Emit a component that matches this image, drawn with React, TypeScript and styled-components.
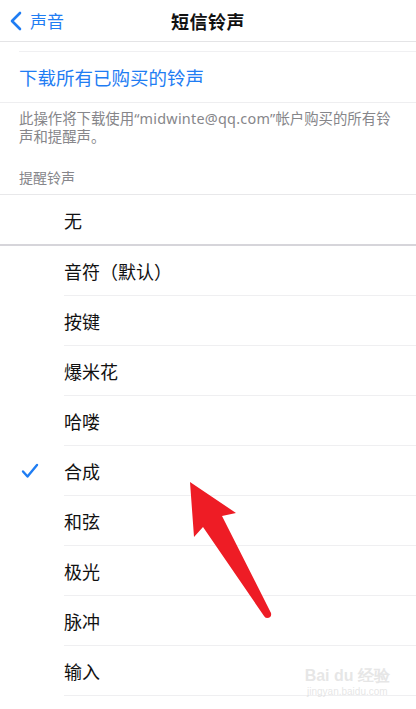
import React from "react";
import styled, { createGlobalStyle } from "styled-components";

const Global = createGlobalStyle`
  html, body { margin: 0; padding: 0; background: #fff; }
  body { font-family: "Noto Sans CJK SC", "Noto Sans", "Liberation Sans", sans-serif; }
`;

const Screen = styled.div`
  position: relative;
  width: 416px;
  height: 709px;
  overflow: hidden;
  background: #fff;
`;

const NavBar = styled.header`
  height: 42px;
  display: grid;
  grid-template-columns: 1fr auto 1fr;
  align-items: center;
  border-bottom: 1px solid #e4e4e6;
  box-sizing: border-box;
`;

const Back = styled.div`
  display: flex;
  align-items: center;
  gap: 8px;
  padding-left: 9px;
  color: #1f7df3;
  font-size: 17px;
  line-height: 1;
`;

const Title = styled.div`
  font-size: 18px;
  font-weight: 700;
  color: #111;
  letter-spacing: 0.5px;
`;

const TopGap = styled.div`
  height: 9px;
  margin-left: 19px;
  border-bottom: 1px solid #f0f0f2;
`;

const ActionRow = styled.div`
  height: 50px;
  display: flex;
  align-items: center;
  padding-left: 19px;
  color: #1f7df3;
  font-size: 18.5px;
  border-bottom: 1px solid #eeeef0;
`;

const Footer = styled.div`
  padding: 7px 20px 0 19px;
  color: #86868a;
  font-family: "Noto Sans", "Noto Sans CJK SC", sans-serif;
  font-size: 14.4px;
  line-height: 18px;
`;

const Email = styled.span`
  letter-spacing: 0.25px;
`;

const SectionHeader = styled.div`
  padding: 22px 19px 8px;
  color: #86868a;
  font-size: 14px;
  line-height: 18px;
  border-bottom: 1px solid #e8e8ea;
`;

const Row = styled.div<{ $strong?: boolean }>`
  height: ${(p) => (p.$strong ? "49px" : "50px")};
  display: flex;
  align-items: center;
  position: relative;
  font-size: 18px;
  color: #111;
  box-sizing: border-box;
`;

const Check = styled.div`
  width: 64px;
  display: flex;
  justify-content: center;
  padding-right: 4px;
  box-sizing: border-box;
`;

const RowLabel = styled.div<{ $divider: "inset" | "none" }>`
  flex: 1;
  height: 100%;
  display: flex;
  align-items: center;
  box-sizing: border-box;
  border-bottom: ${(p) =>
    p.$divider === "inset" ? "1px solid #efeff1" : "none"};
`;

const ThickLine = styled.div`
  height: 2px;
  background: #d6d5da;
`;

const Overlay = styled.svg`
  position: absolute;
  left: 0;
  top: 0;
  pointer-events: none;
`;

const Watermark = styled.div`
  position: absolute;
  right: 26px;
  bottom: 11px;
  text-align: center;
  color: rgba(205, 205, 205, 0.5);
  font-family: "Liberation Sans", sans-serif;
  pointer-events: none;
`;

const WmTop = styled.div`
  font-size: 16px;
  font-weight: 700;
  line-height: 20px;
`;

const WmBottom = styled.div`
  font-size: 10px;
  line-height: 12px;
`;

const tones = ["音符（默认）", "按键", "爆米花", "哈喽", "合成", "和弦", "极光", "脉冲", "输入"];

export default function App() {
  return (
    <Screen>
      <Global />
      <NavBar>
        <Back>
          <svg width="13" height="20" viewBox="0 0 13 20">
            <path d="M11 2 L3 10 L11 18" fill="none" stroke="#1f7df3" strokeWidth="2.6" strokeLinecap="round" strokeLinejoin="round" />
          </svg>
          <span>声音</span>
        </Back>
        <Title>短信铃声</Title>
        <div />
      </NavBar>
      <TopGap />
      <ActionRow>下载所有已购买的铃声</ActionRow>
      <Footer>
        此操作将下载使用<Email>“midwinte@qq.com”</Email>帐户购买的所有铃声和提醒声。
      </Footer>
      <SectionHeader>提醒铃声</SectionHeader>
      <Row $strong>
        <Check />
        <RowLabel $divider="none">无</RowLabel>
      </Row>
      <ThickLine />
      {tones.map((t) => (
        <Row key={t}>
          <Check>
            {t === "合成" && (
              <svg width="18" height="16" viewBox="0 0 18 16">
                <path d="M2 8.5 L6.5 13.5 L16 2" fill="none" stroke="#1f7df3" strokeWidth="2.4" strokeLinecap="round" strokeLinejoin="round" />
              </svg>
            )}
          </Check>
          <RowLabel $divider="inset">{t}</RowLabel>
        </Row>
      ))}
      <Overlay width="416" height="709" viewBox="0 0 416 709">
        <path
          d="M190 482 L236 513 L222 516 L271 613 Q272 618 267 618 Q265 618 264 616 L203 527 L194 537 Z"
          fill="#ee1c25"
        />
      </Overlay>
      <Watermark>
        <WmTop>Bai du 经验</WmTop>
        <WmBottom>jingyan.baidu.com</WmBottom>
      </Watermark>
    </Screen>
  );
}
